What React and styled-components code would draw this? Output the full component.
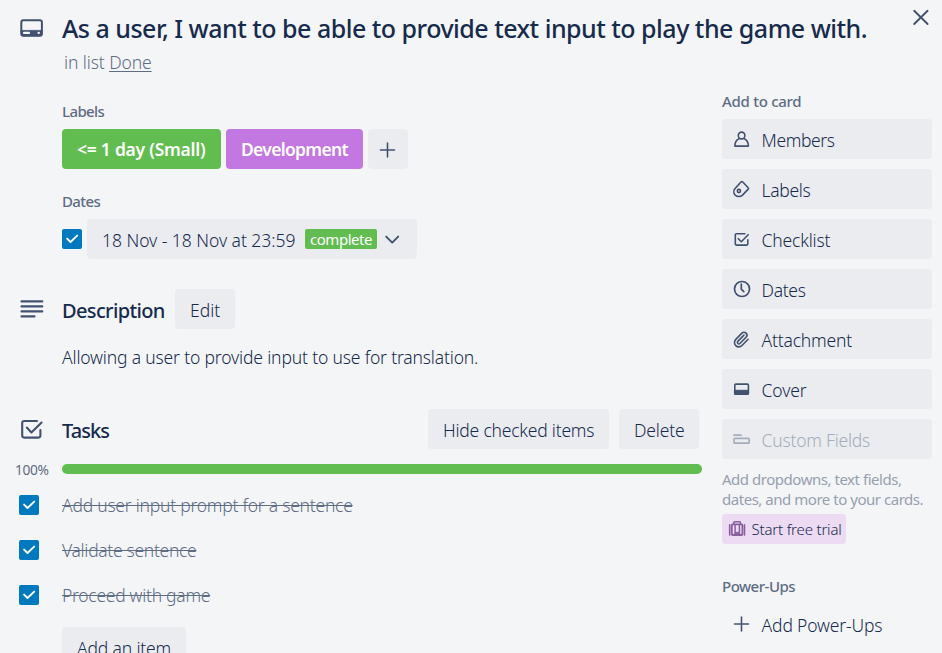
import React from 'react';
import styled, { createGlobalStyle } from 'styled-components';
import { Paperclip } from 'lucide-react';

const c = {
  bg: '#f4f5f7',
  text: '#172b4d',
  muted: '#5e6c84',
  icon: '#42526e',
  button: '#eaecf0',
  disabled: '#a5adba',
  green: '#61bd4f',
  purple: '#c377e0',
  blue: '#0079bf',
};

const GlobalStyle = createGlobalStyle`
  *, *::before, *::after { box-sizing: border-box; }
  body {
    margin: 0;
    background: ${c.bg};
    color: ${c.text};
    font-family: "Noto Sans", sans-serif;
    font-size: 17.5px;
    font-weight: 300;
    line-height: 25px;
    overflow: hidden;
  }
  h2, h3, h4, p { margin: 0; }
  svg { display: block; flex: none; }
`;

const Dialog = styled.div`
  position: relative;
  width: 942px;
  height: 653px;
  padding-top: 13px;
  background: ${c.bg};
  overflow: hidden;
  white-space: nowrap;
`;

const Close = styled.button`
  position: absolute;
  top: 7px;
  right: 10px;
  padding: 0;
  border: 0;
  background: none;
  color: ${c.icon};
`;

const Text = styled.span`
  letter-spacing: ${(p) => p.$track || 0}px;
`;

const Header = styled.header`
  display: grid;
  grid-template-columns: 42px 1fr;
  padding-left: 20px;
  color: ${c.icon};
`;

const HeaderIcon = styled.div`
  padding-top: 5px;
`;

const Title = styled.h2`
  color: ${c.text};
  font-size: 25px;
  font-weight: 500;
  line-height: 31px;
  letter-spacing: -0.51px;
`;

const InList = styled.p`
  margin-top: 6px;
  padding-left: 2px;
  color: ${c.muted};
  letter-spacing: -0.1px;
`;

const ListLink = styled.a`
  text-decoration: underline;
  text-decoration-thickness: 1px;
  text-underline-offset: 1.5px;
`;

const Columns = styled.div`
  display: flex;
  align-items: flex-start;
  gap: 20px;
`;

const Main = styled.main`
  width: 702px;
  padding-top: 24px;
`;

const Sidebar = styled.aside`
  width: 210px;
  padding-top: 14px;
`;

const Details = styled.div`
  display: flex;
  flex-direction: column;
  gap: 20px;
  padding-left: 62px;
`;

const SmallHeading = styled.h4`
  margin: 0 0 5px;
  color: ${c.muted};
  font-size: 15px;
  font-weight: 500;
  line-height: 25px;
  letter-spacing: ${(p) => p.$track}px;
`;

const Row = styled.div`
  display: flex;
  align-items: center;
  gap: 5px;
`;

const Label = styled.span`
  height: 40px;
  width: ${(p) => p.$width}px;
  padding-left: 15px;
  border-radius: 4px;
  background: ${(p) => p.$color};
  color: #fff;
  font-weight: 600;
  line-height: 40px;
  letter-spacing: ${(p) => p.$track}px;
`;

const Button = styled.button`
  display: flex;
  flex: none;
  width: ${(p) => p.$width}px;
  height: 40px;
  padding: 0 0 0 15px;
  border: 0;
  border-radius: 4px;
  background: ${c.button};
  color: ${c.text};
  font: inherit;
  line-height: 43px;
  text-align: left;
  letter-spacing: ${(p) => p.$track || 0}px;
`;

const AddLabel = styled(Button)`
  padding: 1px 0 0;
  align-items: center;
  justify-content: center;
  color: ${c.icon};
`;

const DateButton = styled(Button)`
  align-items: center;

  svg { color: ${c.icon}; }
`;

const Complete = styled.span`
  width: 72px;
  height: 20px;
  margin: 0 6px 0 8px;
  padding-left: 5px;
  border-radius: 2px;
  background: ${c.green};
  color: #fff;
  font-size: 15px;
  font-weight: 400;
  line-height: 20px;
  letter-spacing: -0.46px;
`;

const DateText = styled.span`
  width: 195px;
  height: 40px;
  letter-spacing: -0.04px;
`;

const Box = styled.span`
  display: block;
  flex: none;
  width: 20px;
  height: 20px;
  border-radius: 2px;
  background: ${c.blue};
`;

const SectionHead = styled.div`
  display: flex;
  height: 40px;
  margin-top: ${(p) => p.$top}px;
  padding: 0 3px 0 20px;
  color: ${c.icon};
`;

const SectionIcon = styled.div`
  width: 42px;
  padding-top: 8px;
`;

const SectionTitle = styled.h3`
  width: ${(p) => p.$width}px;
  color: ${c.text};
  font-size: 20px;
  font-weight: 500;
  line-height: 43px;
  letter-spacing: ${(p) => p.$track}px;
`;

const Actions = styled.div`
  display: flex;
  gap: 10px;
  margin-left: auto;
`;

const Paragraph = styled.p`
  margin-top: 16px;
  padding-left: 62px;
  letter-spacing: -0.165px;
`;

const Progress = styled.div`
  display: flex;
  align-items: center;
  height: 10px;
  margin-top: 15px;
  padding-left: 15px;
`;

const Percent = styled.span`
  width: 47px;
  padding-top: 2px;
  color: ${c.muted};
  font-size: 13.75px;
  font-weight: 400;
  line-height: 18px;
  letter-spacing: -0.4px;
`;

const Bar = styled.div`
  flex: 1;
  height: 10px;
  border-radius: 5px;
  background: ${c.green};
`;

const Items = styled.div`
  display: flex;
  flex-direction: column;
  gap: 20px;
  margin: 19px 0;
`;

const Item = styled.div`
  display: flex;
  gap: 23px;
  height: 25px;
  padding-left: 19px;
  color: ${c.muted};

  ${Box} { margin-top: 2px; }
`;

const Done = styled(Text)`
  text-decoration: line-through;
  text-decoration-thickness: 1px;
`;

const AddItem = styled.div`
  padding-left: 62px;
`;

const SideList = styled.div`
  display: flex;
  flex-direction: column;
  gap: 10px;
`;

const SideButton = styled(Button)`
  width: 210px;
  padding-left: 10px;
  gap: 9.6px;
  background: ${(p) => (p.$plain ? 'transparent' : c.button)};
  color: ${(p) => (p.$disabled ? c.disabled : c.text)};

  svg {
    margin-top: 10px;
    color: ${(p) => (p.$disabled ? c.disabled : c.icon)};
  }

  svg svg { margin: 0; }
`;

const Hint = styled.p`
  margin-top: 10px;
  color: #97a0af;
  font-size: 15px;
  font-weight: 400;
  line-height: 20px;
  letter-spacing: -0.47px;
`;

const Trial = styled.button`
  display: flex;
  align-items: center;
  gap: 4.5px;
  width: 124px;
  height: 30px;
  margin: 5px 0 30px;
  padding: 0 0 0 5px;
  border: 0;
  border-radius: 4px;
  background: #eddbf4;
  color: ${c.text};
  font: inherit;
  font-size: 15px;
  line-height: 32px;
  letter-spacing: -0.18px;
`;

const Icon = ({ size = 20, width = 1.6, children }) => (
  <svg
    width={size}
    height={size}
    viewBox={`0 0 ${size} ${size}`}
    fill="none"
    stroke="currentColor"
    strokeWidth={width}
    strokeLinecap="round"
    strokeLinejoin="round"
  >
    {children}
  </svg>
);

const CardIcon = () => (
  <Icon size={24} width={2}>
    <rect x="1.3" y="2.2" width="20.6" height="15.6" rx="2" />
    <path d="M1.3 12.4h20.6v3.4a2 2 0 0 1-2 2H3.3a2 2 0 0 1-2-2z" fill="currentColor" strokeWidth="0.8" />
    <path d="M4 14.9h5" stroke="#f4f5f7" strokeWidth="2.2" />
    <path d="M18.6 14.9h.2" stroke="#f4f5f7" strokeWidth="2.3" />
  </Icon>
);
const CloseIcon = () => (
  <Icon size={22} width={1.9}>
    <path d="M4.2 3.8l13.4 13.2M17.6 3.8L4.2 17" />
  </Icon>
);
const PlusIcon = () => (
  <Icon width={1.6}>
    <path d="M9.5 3v14M2.5 10h14" />
  </Icon>
);
const ChevronIcon = () => (
  <Icon width={1.9}>
    <path d="M3.2 7.6l6 6 6-6" />
  </Icon>
);
const LinesIcon = () => (
  <Icon size={24} width={2.1}>
    <path d="M1.5 4.4h20.8M1.5 9.4h20.8M1.5 14.4h20.8M1.5 19.4h13" />
  </Icon>
);
const BigCheckIcon = () => (
  <Icon size={24} width={2.1}>
    <path d="M17 4H4.2a2 2 0 0 0-2 2v12.6a2 2 0 0 0 2 2h14.2a2 2 0 0 0 2-2v-5.6" />
    <path d="M6.8 10.6l4.6 4.8L21.6 5.6" />
  </Icon>
);
const Tick = () => (
  <Icon width={1.9}>
    <path d="M5.1 9.6l3.4 3.4 6.7-6.4" stroke="#fff" />
  </Icon>
);
const MemberIcon = () => (
  <Icon>
    <ellipse cx="9.6" cy="6.5" rx="3.3" ry="3.4" />
    <path d="M7 9.7C4.3 10.8 2.9 13.400 2.8 17.100h13.600c-.1-3.700-1.400-6.300-4.100-7.400" />
  </Icon>
);
const TagIcon = () => (
  <Icon>
    <path d="M9.2 2.8a.9.9 0 0 1 1.3 0l5.7 6a.9.9 0 0 1 0 1.3l-5.7 6c-2 2-5.4 1.9-7.3 0-1.8-1.9-1.8-4.9.1-6.9z" />
    <circle cx="6.9" cy="12" r="1.6" />
  </Icon>
);
const CheckIcon = () => (
  <Icon>
    <path d="M12.9 4.8H4.3a1 1 0 0 0-1 1v9.3a1 1 0 0 0 1 1h10.5a1 1 0 0 0 1-1v-4.3" />
    <path d="M6.3 9.7l3 3 6.9-7" />
  </Icon>
);
const ClockIcon = () => (
  <Icon width={1.7}>
    <circle cx="10" cy="10" r="7.5" />
    <path d="M9.3 5v5.2l2.5 2.5" />
  </Icon>
);
const ClipIcon = () => (
  <Icon>
    <Paperclip x="0.3" y="1.8" width="17.5" height="17.5" strokeWidth={2.2} />
  </Icon>
);
const CoverIcon = () => (
  <Icon>
    <rect x="2.8" y="5.1" width="13.6" height="10.2" rx="1" />
    <path d="M2.8 11.3h13.6v4H2.8z" fill="currentColor" strokeWidth="1" />
  </Icon>
);
const FieldIcon = () => (
  <Icon width={1.7}>
    <path d="M2 6.2h7" />
    <rect x="2" y="9.3" width="15.2" height="4.9" rx="1" />
  </Icon>
);
const SuitcaseIcon = () => (
  <svg width="20" height="20" viewBox="0 0 20 20" fill="none" stroke="#89609e">
    <path d="M6.7 5V3.8a1 1 0 0 1 1-1h4.800a1 1 0 0 1 1 1V5" strokeWidth="1.6" />
    <rect x="4.8" y="5.3" width="10.600" height="10.700" rx=".8" strokeWidth="1.8" />
    <path d="M2.700 5.800v10.200M17.500 5.800v10.200" strokeWidth="1.600" strokeLinecap="round" />
    <path d="M8.100 5.500V16M12.400 5.500V16" strokeWidth="1.500" />
    <path d="M8.100 13.200h4.300v2.600H8.100z" fill="#89609e" strokeWidth=".6" />
  </svg>
);

const Checked = () => (
  <Box>
    <Tick />
  </Box>
);

const tasks = [
  ['Add user input prompt for a sentence', -0.24],
  ['Validate sentence', -0.31],
  ['Proceed with game', -0.28],
];

const cardActions = [
  ['Members', MemberIcon, -0.4],
  ['Labels', TagIcon, -0.35],
  ['Checklist', CheckIcon, -0.18],
  ['Dates', ClockIcon, -0.35],
  ['Attachment', ClipIcon, -0.2],
  ['Cover', CoverIcon, -0.15],
  ['Custom Fields', FieldIcon, -0.22],
];

export default function App() {
  return (
    <>
      <GlobalStyle />
      <Dialog>
        <Close aria-label="Close"><CloseIcon /></Close>
        <Header>
          <HeaderIcon><CardIcon /></HeaderIcon>
          <div>
            <Title>As a user, I want to be able to provide text input to play the game with.</Title>
            <InList>in list <ListLink>Done</ListLink></InList>
          </div>
        </Header>
        <Columns>
          <Main>
            <Details>
              <section>
                <SmallHeading $track={-0.6}>Labels</SmallHeading>
                <Row>
                  <Label $color={c.green} $width={159} $track={-0.25}>&lt;= 1 day (Small)</Label>
                  <Label $color={c.purple} $width={137} $track={-0.7}>Development</Label>
                  <AddLabel $width={40} aria-label="Add label"><PlusIcon /></AddLabel>
                </Row>
              </section>
              <section>
                <SmallHeading $track={-0.6}>Dates</SmallHeading>
                <Row>
                  <Checked />
                  <DateButton $width={330}>
                    <DateText>18 Nov - 18 Nov at 23:59</DateText>
                    <Complete>complete</Complete>
                    <ChevronIcon />
                  </DateButton>
                </Row>
              </section>
            </Details>

            <SectionHead $top={30}>
              <SectionIcon><LinesIcon /></SectionIcon>
              <SectionTitle $width={113} $track={-0.64}>Description</SectionTitle>
              <Button $width={60}>Edit</Button>
            </SectionHead>
            <Paragraph>Allowing a user to provide input to use for translation.</Paragraph>

            <SectionHead $top={39}>
              <SectionIcon><BigCheckIcon /></SectionIcon>
              <SectionTitle $track={-0.95}>Tasks</SectionTitle>
              <Actions>
                <Button $width={181} $track={-0.21}>Hide checked items</Button>
                <Button $width={80} $track={-0.15}>Delete</Button>
              </Actions>
            </SectionHead>
            <Progress>
              <Percent>100%</Percent>
              <Bar />
            </Progress>
            <Items>
              {tasks.map(([name, track]) => (
                <Item key={name}>
                  <Checked />
                  <Done $track={track}>{name}</Done>
                </Item>
              ))}
            </Items>
            <AddItem>
              <Button $width={124} $track={-0.16}>Add an item</Button>
            </AddItem>
          </Main>

          <Sidebar>
            <SmallHeading $track={-0.28}>Add to card</SmallHeading>
            <SideList>
              {cardActions.map(([name, Glyph, track]) => (
                <SideButton key={name} $disabled={name === 'Custom Fields'}>
                  <Glyph />
                  <Text $track={track}>{name}</Text>
                </SideButton>
              ))}
            </SideList>
            <Hint>
              Add dropdowns, text fields,
              <br />
              dates, and more to your cards.
            </Hint>
            <Trial>
              <SuitcaseIcon />
              Start free trial
            </Trial>
            <SmallHeading $track={-0.5}>Power-Ups</SmallHeading>
            <SideButton $plain>
              <PlusIcon />
              <Text $track={-0.16}>Add Power-Ups</Text>
            </SideButton>
          </Sidebar>
        </Columns>
      </Dialog>
    </>
  );
}
